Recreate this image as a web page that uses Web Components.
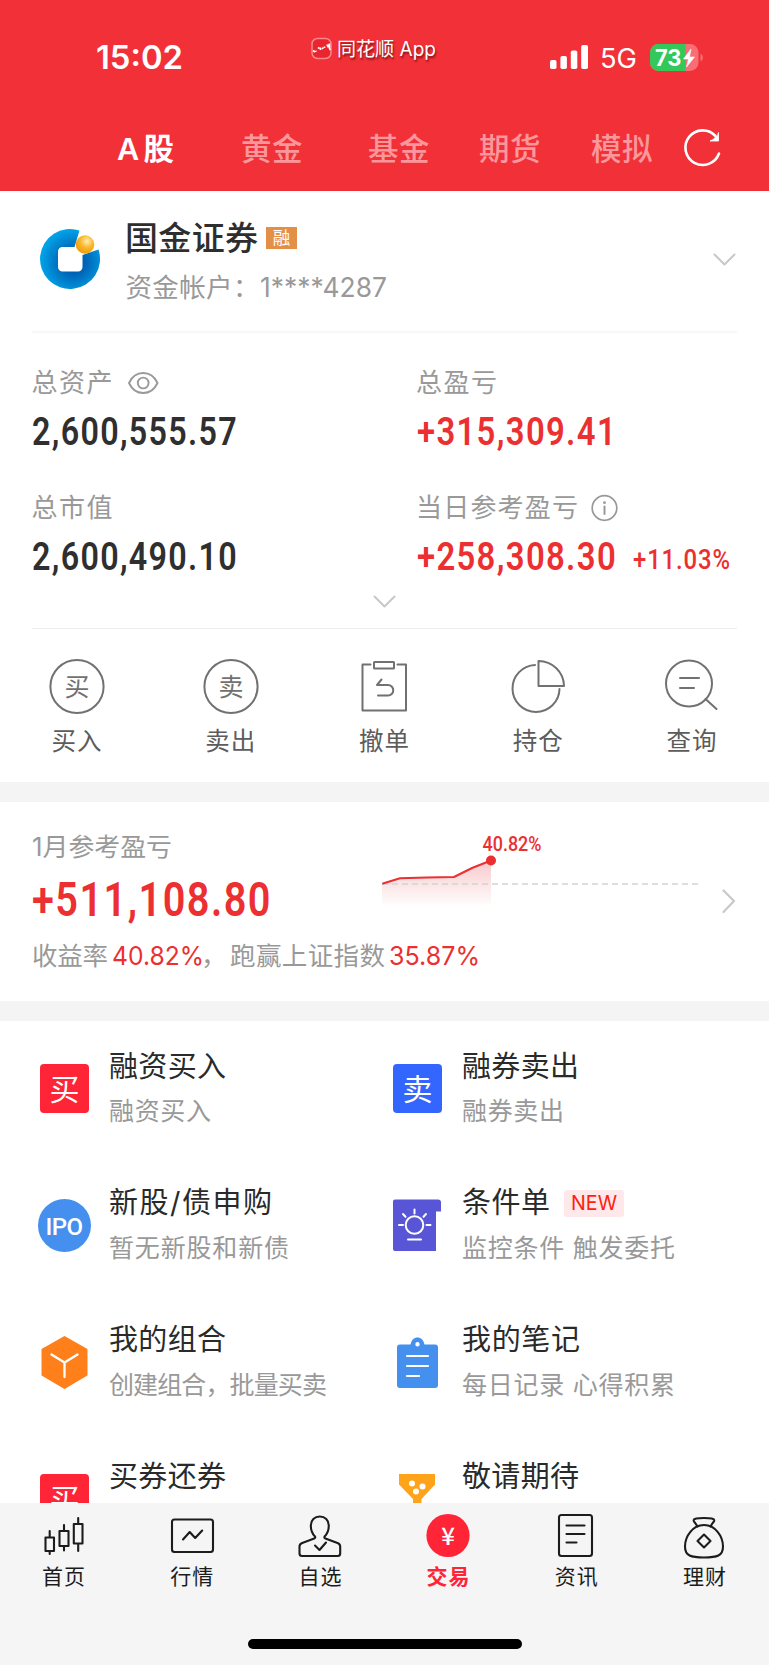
<!DOCTYPE html>
<html lang="zh-CN">
<head>
<meta charset="utf-8">
<title>交易</title>
<style>
html,body{margin:0;padding:0;background:#fff}
body{font-family:Inter,"Noto Sans CJK SC",sans-serif;width:769px;height:1665px;overflow:hidden}
</style>
</head>
<body>
<trade-page></trade-page>
<script>
const define = (name, html, setup) => customElements.define(name, class extends HTMLElement {
  connectedCallback() {
    if (this.shadowRoot) return;
    const root = this.attachShadow({ mode: 'open' });
    const t = document.createElement('template');
    t.innerHTML = typeof html === 'function' ? html(this) : html;
    root.append(t.content.cloneNode(true));
    if (setup) setup(this, root);
  }
});

/* ---------- page ---------- */
define('trade-page', `
<style>
:host{display:flex;flex-direction:column;width:769px;height:1665px;background:#fff;overflow:hidden}
.gap{height:20px;background:#f4f4f4;flex:none}
.gap.s{height:19.5px}
</style>
<app-header></app-header>
<account-row></account-row>
<asset-stats></asset-stats>
<quick-actions></quick-actions>
<div class="gap"></div>
<month-profit></month-profit>
<div class="gap s"></div>
<feature-grid></feature-grid>
<tab-bar></tab-bar>`);

define('app-header', `
<style>
:host{display:flex;flex-direction:column;height:191px;flex:none;background:#f23038;color:#fff}
.status{display:flex;height:114px;align-items:flex-start}
.status>*{flex:none}
.time{font-size:32px;font-weight:600;line-height:40px;margin:38px 0 0 96px}
.app{display:flex;align-items:center;margin:37px 0 0 128px;gap:5px;height:24px}
.app fit-text{font-size:19.5px;font-weight:400;line-height:24px;text-shadow:1px 2px 2px rgba(70,0,0,.65)}
.sig{margin:44px 0 0 114px}
.net{font-size:27px;font-weight:400;line-height:30px;margin:43.5px 0 0 10.5px}
.bat{margin:43px 0 0 13px}
nav{display:grid;grid-template-columns:124px 127px 111px 112px 93px 40px;padding:14px 0 0 117px;font-size:30.5px;font-weight:500;line-height:42px;color:#fa979b}
nav .on{color:#fff;font-weight:600}
nav ui-icon{margin-top:-1px}
</style>
<div class="status">
<fit-text class="time" w="87">15:02</fit-text>
<div class="app"><ui-icon name="app"></ui-icon><fit-text w="99">同花顺 App</fit-text></div>
<ui-icon class="sig" name="signal"></ui-icon>
<fit-text class="net" w="37">5G</fit-text>
<ui-icon class="bat" name="battery"></ui-icon>
</div>
<nav>
<fit-text class="on" w="57" mode="space">A股</fit-text>
<fit-text w="61.5" mode="space">黄金</fit-text>
<fit-text w="61.5" mode="space">基金</fit-text>
<fit-text w="61.5" mode="space">期货</fit-text>
<fit-text w="61.5" mode="space">模拟</fit-text>
<ui-icon name="refresh"></ui-icon>
</nav>`);

define('account-row', `
<style>
:host{display:flex;flex:none;box-sizing:border-box;margin:0 32px;width:705px;border-bottom:2px solid #f8f8f8;padding:26px 0 0 8px;align-items:flex-start;height:142px}
.logo{margin-top:12px}
.info{margin-left:25px;flex:1}
.row{display:flex;align-items:center;height:42px}
.name{font-size:33px;font-weight:500;line-height:42px;color:#2e2e2e}
.tag{margin-left:8px;width:31px;height:22px;background:#e38f47;color:#fff;font-size:17.5px;line-height:22px;text-align:center}
.acc{font-size:26.5px;line-height:36px;color:#999;display:flex;margin:10px 0 0 .5px}
.down{margin:35px 1px 0 0}
</style>
<ui-icon class="logo" name="logo"></ui-icon>
<div class="info">
<div class="row"><fit-text class="name" w="133" mode="space">国金证券</fit-text><span class="tag">融</span></div>
<div class="acc"><fit-text w="134" mode="space">资金帐户：</fit-text><fit-text w="127">1****4287</fit-text></div>
</div>
<ui-icon class="down" name="down"></ui-icon>`);

define('asset-stats', `
<style>
:host{display:flex;flex-direction:column;flex:none;height:296px;width:705px;margin:0 32px;box-sizing:border-box;border-bottom:1px solid #eee;padding-top:35px}
.grid{display:grid;grid-template-columns:384.5px 1fr;grid-auto-rows:84px;row-gap:41px}
.down{align-self:center;margin:17px 1px 0 0}
</style>
<div class="grid">
<stat-cell label="总资产" lw="81" icon="eye" value="2,600,555.57" vw="206"></stat-cell>
<stat-cell red label="总盈亏" lw="81" value="+315,309.41" vw="200"></stat-cell>
<stat-cell label="总市值" lw="81" value="2,600,490.10" vw="206"></stat-cell>
<stat-cell red label="当日参考盈亏" lw="162" icon="info" value="+258,308.30" vw="200" extra="+11.03%"></stat-cell>
</div>
<ui-icon class="down" name="down"></ui-icon>`);

define('stat-cell', el => {
  const a = n => el.getAttribute(n);
  return `
<style>
:host{display:flex;flex-direction:column;gap:14px;color:#2f2f2f}
:host([red]){color:#ec2f31}
.l{display:flex;align-items:center;height:30px;font-size:26px;line-height:30px;color:#999}
.l fit-text{margin-left:-.5px}
.l ui-icon{margin-left:13px}
.v{display:flex;height:40px;font-family:Roboto,sans-serif;font-weight:600;font-size:39.5px;line-height:40px;letter-spacing:1.6px}
.x{font-size:27px;font-weight:500;letter-spacing:1px;margin:3px 0 0 16px}
</style>
<div class="l"><fit-text w="${a('lw')}" mode="space">${a('label')}</fit-text>${a('icon') ? `<ui-icon name="${a('icon')}"></ui-icon>` : ''}</div>
<div class="v"><fit-text w="${a('vw')}">${a('value')}</fit-text>${a('extra') ? `<fit-text class="x" w="98">${a('extra')}</fit-text>` : ''}</div>`;
});

define('quick-actions', `
<style>
:host{display:grid;grid-template-columns:repeat(5,1fr);height:153px;flex:none}
div{display:flex;flex-direction:column;align-items:center;padding-top:27px;gap:7px;font-size:24.5px;line-height:36px;color:#5c5c5c}
fit-text{margin-right:1px}
</style>
<div><ui-icon name="buy"></ui-icon><fit-text w="50" mode="space">买入</fit-text></div>
<div><ui-icon name="sell"></ui-icon><fit-text w="50" mode="space">卖出</fit-text></div>
<div><ui-icon name="cancel"></ui-icon><fit-text w="50" mode="space">撤单</fit-text></div>
<div><ui-icon name="pie"></ui-icon><fit-text w="50" mode="space">持仓</fit-text></div>
<div><ui-icon name="query"></ui-icon><fit-text w="50" mode="space">查询</fit-text></div>`);

define('month-profit', `
<style>
:host{display:flex;height:199px;flex:none;padding:0 32px;box-sizing:border-box;width:769px;align-items:flex-start}
.t{width:350px;display:flex;flex-direction:column;flex:none}
.a{font-size:25.5px;line-height:30px;color:#999;margin-top:29.5px}
.b{font-family:Roboto,sans-serif;font-weight:600;font-size:48px;line-height:50px;letter-spacing:1.8px;color:#ec2f31;margin-top:13.5px}
.c{display:flex;font-size:25.5px;line-height:34px;color:#999;margin-top:14px;white-space:nowrap}
.c .n{color:#ec2f31;font-size:26px}
.chart{margin-top:28px}
.r{margin:86px 0 0 19px}
</style>
<div class="t">
<fit-text class="a" w="140">1月参考盈亏</fit-text>
<fit-text class="b" w="240">+511,108.80</fit-text>
<div class="c"><fit-text w="76" mode="space">收益率</fit-text><fit-text class="n" style="margin-left:4px" w="92">40.82%</fit-text><fit-text style="margin:0 3px 0 -3px" w="26">，</fit-text><fit-text w="155" mode="space">跑赢上证指数</fit-text><fit-text class="n" style="margin-left:4px" w="91">35.87%</fit-text></div>
</div>
<ui-icon class="chart" name="chart"></ui-icon>
<ui-icon class="r" name="right"></ui-icon>`);

define('feature-grid', `
<style>
:host{display:grid;grid-template-columns:353px 1fr;grid-auto-rows:136.8px;height:482.5px;flex:none;overflow:hidden;padding-left:36px}
</style>
<feature-item icon="sqbuy" title-text="融资买入" tw="117" sub="融资买入" sw="102"></feature-item>
<feature-item icon="sqsell" title-text="融券卖出" tw="117" sub="融券卖出" sw="102"></feature-item>
<feature-item icon="ipo" title-text="新股/债申购" tw="163" sub="暂无新股和新债" sw="180"></feature-item>
<feature-item icon="bulb" title-text="条件单" tw="88" sub="监控条件 触发委托" sw="213" badge="NEW"></feature-item>
<feature-item icon="hex" title-text="我的组合" tw="117" sub="创建组合，批量买卖" sw="218"></feature-item>
<feature-item icon="note" title-text="我的笔记" tw="118" sub="每日记录 心得积累" sw="213"></feature-item>
<feature-item icon="sqbuy" title-text="买券还券" tw="117"></feature-item>
<feature-item icon="funnel" title-text="敬请期待" tw="117"></feature-item>`);

define('feature-item', el => {
  const a = n => el.getAttribute(n);
  return `
<style>
:host{display:flex;align-items:flex-start}
ui-icon{margin-top:39.5px}
.t{margin-left:16px;padding-top:28px}
.h{display:flex;height:36px;align-items:center;font-size:29px;line-height:36px;color:#2a2a2a}
.s{font-size:25px;line-height:32px;height:32px;color:#999;margin-top:10.5px}
.n{margin-left:14px;width:60px;height:27px;border-radius:3px;background:#ffe8ea;color:#ff2010;display:flex;justify-content:center;font-size:20px;line-height:27px}
</style>
<ui-icon name="${a('icon')}"></ui-icon>
<div class="t"><div class="h"><fit-text w="${a('tw')}" mode="space">${a('title-text')}</fit-text>${a('badge') ? `<span class="n"><fit-text w="46">${a('badge')}</fit-text></span>` : ''}</div>
${a('sub') ? `<div class="s"><fit-text w="${a('sw')}" mode="space">${a('sub')}</fit-text></div>` : ''}</div>`;
});

define('tab-bar', `
<style>
:host{display:flex;flex-direction:column;height:162px;flex:none;background:#f5f5f5;align-items:center}
nav{display:grid;grid-template-columns:repeat(6,1fr);width:769px;height:136px;position:relative;left:-.5px}
nav div{display:flex;flex-direction:column;align-items:center;padding-top:7px;gap:4px;font-size:21px;line-height:30px;color:#1c1c1c}
nav .on{color:#ff2436;font-weight:600}
.home{width:274px;height:10px;border-radius:5px;background:#000}
</style>
<nav>
<div><ui-icon name="t1"></ui-icon><fit-text w="43" mode="space">首页</fit-text></div>
<div><ui-icon name="t2"></ui-icon><fit-text w="43" mode="space">行情</fit-text></div>
<div><ui-icon name="t3"></ui-icon><fit-text w="43" mode="space">自选</fit-text></div>
<div class="on"><ui-icon name="t4"></ui-icon><fit-text w="43" mode="space">交易</fit-text></div>
<div><ui-icon name="t5"></ui-icon><fit-text w="43" mode="space">资讯</fit-text></div>
<div><ui-icon name="t6"></ui-icon><fit-text w="43" mode="space">理财</fit-text></div>
</nav>
<div class="home"></div>`);

/* ---------- icons: [width, height, markup] ---------- */
const g = (c, w, s) => `<g fill="none" stroke="${c}" stroke-width="${w}" stroke-linejoin="round" stroke-linecap="round">${s}</g>`;
const txt = (x, y, size, t, fill, extra = '') => `<text x="${x}" y="${y}" font-size="${size}" fill="${fill}" text-anchor="middle" ${extra}>${t}</text>`;
const icons = {
  app: [21, 22, `<rect x="1" y="0.500" width="19" height="20" rx="5.5" fill="#e9262f" stroke="#f9888c" stroke-width="1.5"/><path d="M2 12.500l2 1.500M4.500 13l1 .5M7 9.500l1.500 1M9.500 12V9.500M11 11l1.500-1.500M13.500 8.500v1.500M15.500 7.500l1.500-.5v2.500M18.500 5.500v5l1 1.500" fill="none" stroke="#fff" stroke-width="1.600"/>`],
  signal: [39, 25, `<g fill="#fff"><rect x="0" y="16" width="6.500" height="9" rx="1.800"/><rect x="10.400" y="12" width="6.500" height="13" rx="1.800"/><rect x="20.800" y="6.500" width="6.500" height="18.500" rx="1.800"/><rect x="31.200" y="1" width="6.800" height="24" rx="1.800"/></g>`],
  battery: [54, 28, `<rect x="0" y="1" width="48.500" height="27" rx="8.500" fill="#f76f74"/><path d="M35.500 1H8.500A8.500 8.500 0 0 0 0 9.500v10A8.500 8.500 0 0 0 8.500 28H35.500z" fill="#34c759"/><path d="M50.500 10.500a4.500 4.500 0 0 1 0 8z" fill="#f76f74"/><text x="5" y="22.500" font-size="22.500" font-weight="700" fill="#fff" textLength="26.500" lengthAdjust="spacingAndGlyphs">73</text><path d="M41 6L33.500 16h5l-2 8 8-10h-5z" fill="#fff" stroke="#fff" stroke-width=".6"/>`],
  refresh: [40, 40, g('#fff', 2.600, `<path d="M35 26.500A17.300 17.300 0 1 1 31.500 9"/>`) + `<path d="M34.500 5.500V14H26l3-1.500 4.500-4z" fill="#fff" stroke="#fff" stroke-width=".8"/>`],
  logo: [60, 60, `<defs><radialGradient id="b" cx=".56" cy=".55" r=".55"><stop offset=".35" stop-color="#0062b5"/><stop offset="1" stop-color="#00a3e8"/></radialGradient><radialGradient id="o" cx=".6" cy=".32" r=".62"><stop offset="0" stop-color="#ffeebb"/><stop offset=".55" stop-color="#fbb92a"/><stop offset="1" stop-color="#f0a010"/></radialGradient></defs><path d="M39.500 1.500A30 30 0 1 0 58.500 20.500L42.500 26V38a4.500 4.500 0 0 1-4.500 4.500H22.500A4.500 4.500 0 0 1 18 38V22.500A4.500 4.500 0 0 1 22.500 18H34.500z" fill="url(#b)"/><circle cx="45" cy="15.500" r="9.300" fill="url(#o)"/>`],
  down: [24, 16, g('#c8c8c8', 2, `<path d="M2.500 2.500l10 10 10-10"/>`)],
  right: [16, 26, g('#c8c8c8', 2.200, `<path d="M2.500 2.500l10.500 10.500L2.500 24"/>`)],
  eye: [34, 24, g('#999', 1.900, `<path d="M3 12C6 5.500 11 2 17.200 2S28.500 5.500 31.500 12C28.500 18.500 23.500 22 17.200 22S6 18.500 3 12z"/><circle cx="17.200" cy="12" r="5.400"/>`)],
  info: [28, 28, g('#999', 1.700, `<circle cx="13.500" cy="14" r="12.300"/><path d="M13.500 12.500v7.500" stroke-width="2"/>`) + `<circle cx="13.500" cy="8.700" r="1.400" fill="#999"/>`],
  buy: [60, 60, g('#717171', 2, `<circle cx="30" cy="30.500" r="26.600"/>`) + txt(30, 39.500, 25, '买', '#717171')],
  sell: [60, 60, g('#717171', 2, `<circle cx="30" cy="30.500" r="26.600"/>`) + txt(30, 39.500, 25, '卖', '#717171')],
  cancel: [60, 60, g('#717171', 2, `<path d="M16.500 8.500H8.500V54.500H52V8.500H43.500"/><rect x="20" y="6" width="20" height="6.500" rx=".5"/><path d="M27.500 23.500l-4.500 5.500H34a5.200 5.200 0 0 1 0 10.500H24"/>`)],
  pie: [60, 60, g('#717171', 2, `<path d="M27 9A23.500 23.500 0 1 0 51.500 33"/><path d="M30.500 5V30H56A25.500 25.500 0 0 0 30.500 5z"/>`)],
  query: [60, 60, g('#717171', 2, `<circle cx="27" cy="27.500" r="23"/><path d="M43.500 43L54.500 53M18 22h19M18 32h14"/>`)],
  chart: [320, 80, `<defs><linearGradient id="f" x1="0" y1="0" x2="0" y2="1"><stop offset="0" stop-color="#f8c9cb"/><stop offset="1" stop-color="#fff"/></linearGradient></defs><path d="M0 54L18 48.500 72 47 90 38 109 30.500V77H0z" fill="url(#f)"/><path d="M0 54H320" stroke="#d4d4d4" stroke-width="1.500" stroke-dasharray="6 4"/>` + g('#ec2f31', 2, `<path d="M1 53.500L18 48.200 45 47.500 72 47 90 38 109 30.500"/>`) + `<circle cx="109" cy="30.500" r="5" fill="#ec2f31"/><text x="100.500" y="20.500" font-size="19.500" font-weight="500" fill="#ec2f31" style="font-family:Roboto" textLength="59" lengthAdjust="spacingAndGlyphs">40.82%</text>`],
  sqbuy: [57, 57, `<rect x="4" y="4" width="49" height="49" rx="4" fill="#ff2436"/>` + txt(28.500, 39.500, 30, '买', '#fff')],
  sqsell: [57, 57, `<rect x="4" y="4" width="49" height="49" rx="4" fill="#3366ff"/>` + txt(28.500, 39.500, 30, '卖', '#fff')],
  ipo: [57, 57, `<circle cx="28.500" cy="28.500" r="26.500" fill="#4590ee"/><text x="9.500" y="37.500" font-size="24" font-weight="500" fill="#fff" style="font-family:Roboto" textLength="37.500" lengthAdjust="spacing">IPO</text>`],
  bulb: [57, 57, `<path d="M6 2.500H49a3 3 0 0 1 3 3V14.500H47V54H6a2 2 0 0 1-2-2V4.500a2 2 0 0 1 2-2z" fill="#5856d6"/>` + g('#fff', 2, `<circle cx="25.500" cy="28" r="8.800"/><path d="M25.500 12.500v4M14 17l2.500 2.700M37 17l-2.500 2.700M10 28h4M37.500 28h4M19 42.500h13"/>`)],
  hex: [57, 57, g('#ff801a', 2, `<path fill="#ff801a" d="M28.500 3L50.500 15.500V41L28.500 54 6.500 41V15.500z"/>`) + g('#fff', 2.300, `<path d="M15.500 20.500L28.500 28.500 41.500 20.500M28.500 28.500V43"/>`)],
  note: [57, 57, `<path fill-rule="evenodd" d="M11 10.500H21.500C22.500 6 25 3.500 28.500 3.500S34.500 6 35.500 10.500H46a3 3 0 0 1 3 3V51a3 3 0 0 1-3 3H11a3 3 0 0 1-3-3V13.500a3 3 0 0 1 3-3zM28.500 8a2.200 2.200 0 1 0 0 4.400 2.200 2.200 0 0 0 0-4.400z" fill="#4590ee"/>` + g('#fff', 2.200, `<path d="M18 22h21M18 32h21M18 42h12"/>`)],
  funnel: [57, 57, `<path d="M10 4H46V14.500L32.500 29V53H24V29L10 14.500z" fill="#ffa31a"/><g fill="#fff"><circle cx="23" cy="13.500" r="3"/><circle cx="33.500" cy="16.500" r="3"/><circle cx="27" cy="21.500" r="3"/></g>`],
  t1: [48, 48, g('#1c1c1c', 2.100, `<path d="M5.500 27.500h8.500V41H5.500zM9.700 21v6.500M9.700 41v3M19.500 21h9V36h-9zM24 15v6M24 36v4.500M33.800 14h8.700V33.500h-8.700zM38.200 8v6M38.200 33.500V41"/>`)],
  t2: [48, 48, g('#1c1c1c', 2.100, `<rect x="4" y="9.500" width="41" height="32.500" rx="2.500"/><path d="M15 29.500l6.700-7.500 5.500 6 7-7.500"/>`)],
  t3: [48, 48, g('#1c1c1c', 2.100, `<path d="M19 26.500C16.500 24 14.800 20 14.800 15.500c0-5.500 3.800-9 9-9s9 3.500 9 9c0 4.500-1.700 8.500-4.200 11-.5 1-.3 1.600.8 2.100L41.500 33c2 .8 2.700 1.700 2.700 3.500V43.500c0 1.700-.7 2.500-2.500 2.500H6c-1.800 0-2.500-.8-2.500-2.500V36.500c0-1.800.7-2.700 2.700-3.500L18.200 28.600c1.100-.5 1.300-1.100.8-2.100z"/><path d="M19 35.500l4.500 4.500 6.500-7.500"/>`)],
  t4: [48, 48, `<circle cx="24" cy="25.500" r="21.600" fill="#ff2436"/>` + txt(24, 34.500, 24, '¥', '#fff', 'font-weight="500" style="font-family:\'Noto Sans CJK SC\'"')],
  t5: [48, 48, g('#1c1c1c', 2.100, `<rect x="7" y="5" width="33" height="41" rx="2.500"/><path d="M14.500 15.500h18M14.500 24h18M14.500 32.500h10"/>`)],
  t6: [48, 48, g('#1c1c1c', 2.100, `<path d="M17.500 16.500C15.500 13 14 11.800 13.700 10.700 13.300 8.500 17.500 8 24 8s10.500.5 10.200 2.700C34 11.800 32.500 13 30.500 16.500"/><path d="M24 15C13 15 5 26 5 36.500 5 46 11 47.500 24 47.500S43 46 43 36.500C43 26 35 15 24 15z"/><path d="M24 24.500l6.500 6.500L24 37.500 17.500 31z"/>`)]
};

define('ui-icon', el => {
  const [w, h, body] = icons[el.getAttribute('name')];
  return `<style>:host{display:block;flex:none;width:${w}px;height:${h}px}svg{display:block;overflow:visible;font-family:Inter,"Noto Sans CJK SC",sans-serif}</style><svg width="${w}" height="${h}" viewBox="0 0 ${w} ${h}">${body}</svg>`;
});

/* A run of text set to a given width, by tracking (mode="space") or by horizontal scale. */
define('fit-text', `<style>:host{display:block;flex:none;white-space:nowrap}span{display:inline-block;transform-origin:0 50%;vertical-align:top}</style><span><slot></slot></span>`,
  (el, root) => {
    const w = +el.getAttribute('w'), s = root.querySelector('span');
    el.style.width = w + 'px';
    const n = s.getBoundingClientRect().width;
    if (el.getAttribute('mode') === 'space') s.style.letterSpacing = (w - n) / (el.textContent.length - 1) + 'px';
    else s.style.transform = `scaleX(${w / n})`;
  });
</script>
</body>
</html>
